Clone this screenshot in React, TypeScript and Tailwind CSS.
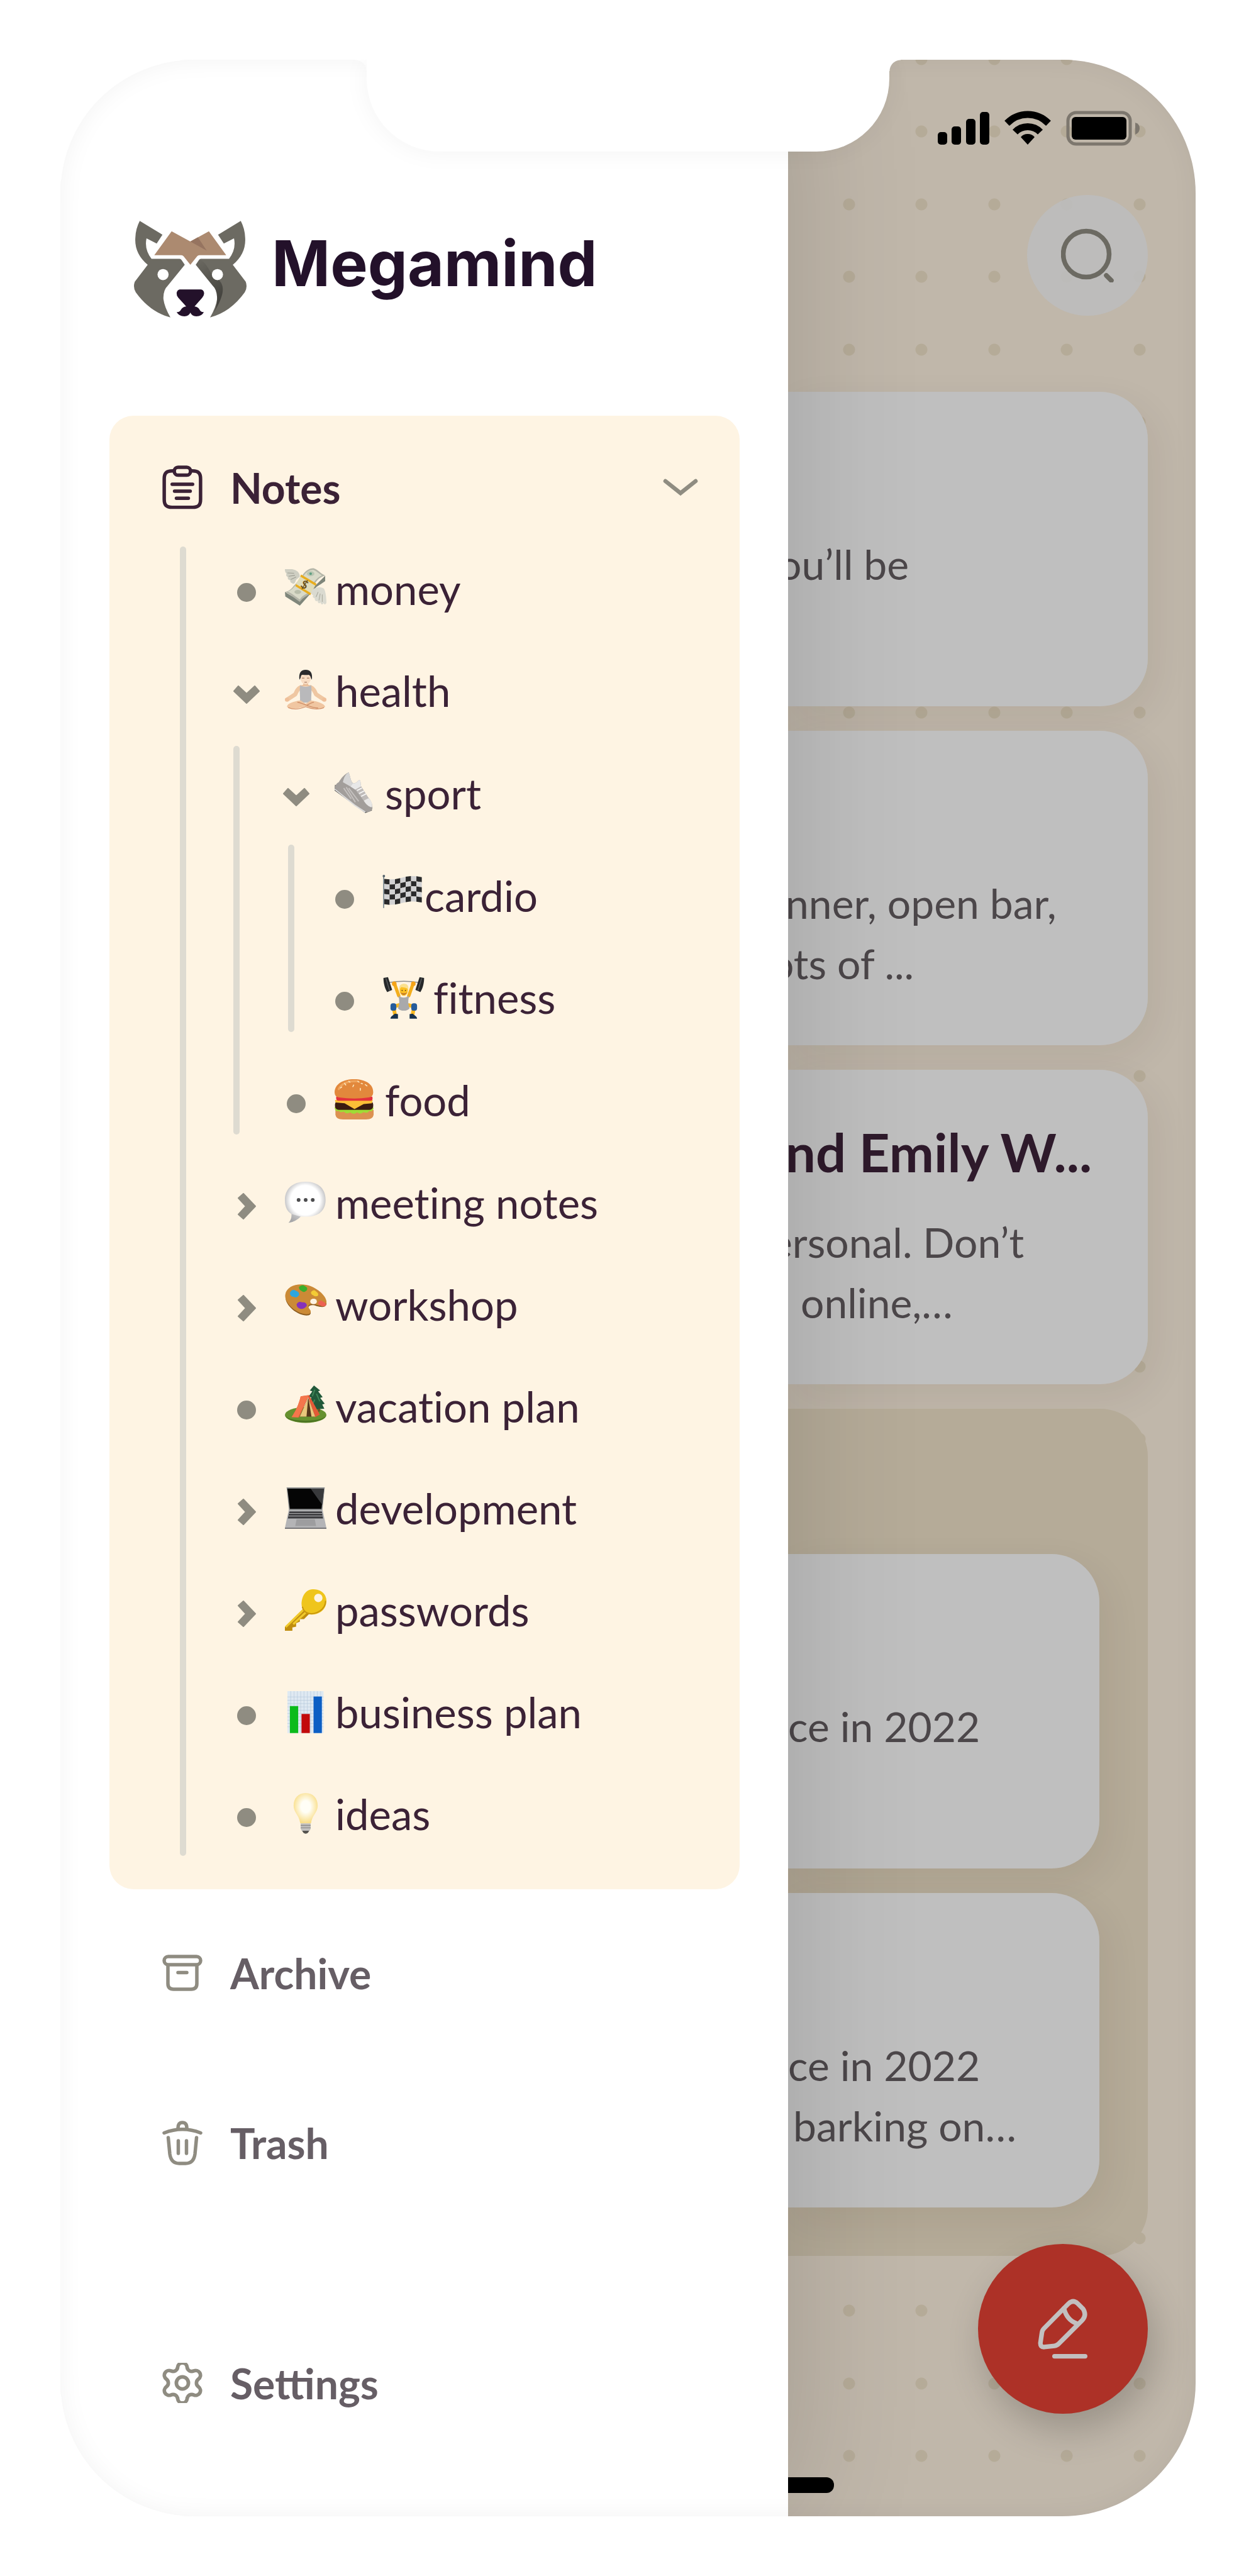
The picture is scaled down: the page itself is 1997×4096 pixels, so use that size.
import React from "react";
import { Settings } from "lucide-react";

type Marker = "dot" | "open" | "closed";

type Note = {
  label: string;
  icon: React.ReactNode;
  marker: Marker;
  tight?: boolean;
  children?: Note[];
};

/* ---------- pictograms, all on a 100 x 100 grid ---------- */

function Picto({ children }: { children: React.ReactNode }) {
  return (
    <svg viewBox="0 0 100 100" className="size-[66px] shrink-0 overflow-visible" aria-hidden="true">
      {children}
    </svg>
  );
}

const Money = (
  <Picto>
    <path d="M0 58 L36 79 L97 19 V32 L76 46 L36 91 L1 69Z" fill="#7f867b" />
    <path d="M0 58 C14 56 18 46 28 36 L42 18 C50 6 60 0 70 1 C80 4 86 14 97 18 C84 22 76 30 70 42 L62 60 C52 70 44 70 36 82 C24 74 14 64 0 58Z" fill="#b4b5a8" />
    <path d="M6 57 C18 54 22 44 32 36 L44 20 C52 9 60 4 69 5 C77 8 82 14 89 18 C78 24 72 30 66 42 L58 58 C48 66 42 66 36 76 C26 70 18 62 6 57Z" fill="#d9dac8" />
    <ellipse cx="62" cy="14" rx="9" ry="6" fill="#b9c6b1" />
    <circle cx="62" cy="14" r="3" fill="#5d9f80" />
    <ellipse cx="31" cy="58" rx="8" ry="5" fill="#b9beab" />
    <path d="M39 17 L75 39 L61 65 L25 42Z" fill="#e0dcb9" />
    <path d="M39 16 L76 38 L74 43 L37 21Z" fill="#e9ad1d" />
    <path d="M27 39 L63 61 L61 66 L25 44Z" fill="#e9ad1d" />
    <text x="47" y="50" fontSize="27" fontWeight="700" textAnchor="middle" transform="rotate(28 47 41)" fill="#6b5118">$</text>
    <path d="M0 3 C10 4 16 1 24 5 C31 8 35 12 36 20 C34 24 28 26 26 31 C24 38 20 40 18 37 C14 36 12 33 13 30 C8 29 6 26 7 22 C3 20 2 17 4 14 C1 11 0 8 0 3Z" fill="#cfcfc3" />
    <path d="M6 12 L22 13 M9 20 L24 18 M14 28 L27 22" stroke="#9d9d92" strokeWidth="1.6" fill="none" />
    <path d="M66 53 C72 46 86 44 94 50 C98 56 100 72 100 84 C97 90 94 88 93 84 C91 90 87 89 86 83 C83 87 79 85 79 79 C75 82 71 79 72 73 C68 72 66 70 68 66 C63 64 62 60 66 53Z" fill="#dadad0" />
    <path d="M75 70 L80 58 M82 78 L85 62 M90 82 L90 64" stroke="#aaa99d" strokeWidth="1.6" fill="none" />
  </Picto>
);

const Yoga = (
  <Picto>
    <path d="M38 42 C31 45 28 52 25 59 L7 71 M62 42 C69 45 72 52 75 59 L93 71" stroke="#efc7a2" strokeWidth="10" strokeLinecap="round" strokeLinejoin="round" fill="none" />
    <circle cx="5" cy="72" r="5" fill="#efbf99" />
    <circle cx="95" cy="72" r="5" fill="#efbf99" />
    <path d="M44 26 H56 V36 L66 40 H34 L44 36Z" fill="#eac09c" />
    <path d="M37 37 C42 42 58 42 63 37 C66 50 62 66 64 79 H36 C38 66 34 50 37 37Z" fill="#b9b9bb" />
    <ellipse cx="50" cy="20" rx="12.5" ry="15" fill="#f8ddc4" />
    <path d="M35 24 C33 8 38 0 50 0 C62 0 67 8 65 24 C62 20 62 13 57 12 C50 14 41 10 39 14 C38 18 38 21 35 24Z" fill="#2b2b2d" />
    <path d="M41 20 h6 M53 20 h6 M47 30 h6" stroke="#94674f" strokeWidth="1.5" />
    <path d="M38 74 C20 76 5 82 5 89 C8 96 36 94 50 88 C64 94 92 96 97 89 C95 82 80 76 62 74 L50 82Z" fill="#f0c6a1" />
    <path d="M8 91 C22 97 38 94 50 89 C62 94 80 97 94 91" stroke="#d5936a" strokeWidth="2" fill="none" />
    <path d="M30 78 C44 80 60 92 80 92 M70 78 C62 80 56 84 52 86" stroke="#cf8f68" strokeWidth="2" fill="none" />
  </Picto>
);

const Sneaker = (
  <Picto>
    <path d="M1 30 L0 44 L74 98 L90 92 L88 82Z" fill="#4b4a4a" />
    <path d="M34 0 C38 10 38 20 44 26 C50 28 54 22 60 18 C64 22 62 28 64 34 L80 60 C86 66 92 74 91 88 C88 95 80 98 74 95 L48 78 L0 38 C2 30 6 26 10 24 C16 14 24 4 34 0Z" fill="#a29e9b" />
    <path d="M34 0 C38 10 38 20 44 26 L38 34 L20 24 C22 14 26 4 34 0Z" fill="#d6d6d6" />
    <path d="M44 26 C50 28 54 22 60 18 C64 22 62 28 64 34 L50 42 L38 34Z" fill="#e8e8e8" />
    <path d="M28 36 L50 72 M34 38 L58 70 M22 38 L40 64" stroke="#c4c0be" strokeWidth="3" fill="none" />
    <path d="M50 42 L64 34 L82 62 L70 68Z" fill="#bfbbb9" />
    <path d="M54 44 l12 -6 M59 51 l12 -6 M64 58 l12 -6" stroke="#f8f8f8" strokeWidth="2.5" />
    <path d="M70 68 L82 62 C88 68 92 76 90 84 C84 84 76 78 70 68Z" fill="#e8e7e6" />
    <path d="M0 40 L48 79 L74 96" stroke="#dddddd" strokeWidth="3" fill="none" />
  </Picto>
);

const wave = (col: number) => 9 - 3 * Math.sin((col / 7) * 6.28 - 2.9) - col * 0.6;

const Flag = (
  <Picto>
    <rect x="0" y="2" width="3" height="78" fill="#8c979c" />
    <circle cx="2" cy="3" r="3" fill="#56646b" />
    {Array.from({ length: 35 }, (_, i) => {
      const c = i % 7;
      const r = Math.floor(i / 7);
      const x = 3 + c * 12.9;
      const a = wave(c) + r * 12.2;
      const b = wave(c + 1) + r * 12.2;
      return (
        <path
          key={i}
          d={`M${x} ${a} L${x + 13} ${b} V${b + 12.4} L${x} ${a + 12.4}Z`}
          fill={(c + r) % 2 === 0 ? "#2a2a2b" : "#d2d2d3"}
        />
      );
    })}
  </Picto>
);

const Lifter = (
  <Picto>
    <path d="M14 14 Q50 8 86 14" stroke="#8e8e8e" strokeWidth="2" fill="none" />
    <path d="M1 3 L12 1 L22 32 L10 37 C4 28 1 14 1 3Z" fill="#26282a" />
    <path d="M99 3 L88 1 L78 32 L90 37 C96 28 99 14 99 3Z" fill="#26282a" />
    <path d="M7 4 L16 34 M93 4 L84 34" stroke="#5d6063" strokeWidth="2" />
    <path d="M28 18 L38 46 M72 18 L62 46" stroke="#f3ae1c" strokeWidth="8" strokeLinecap="round" />
    <circle cx="27" cy="17" r="5.5" fill="#f5a318" />
    <circle cx="73" cy="17" r="5.5" fill="#f5a318" />
    <path d="M40 68 L25 72 L29 92 M60 68 L75 72 L71 92" stroke="#f9b820" strokeWidth="9" strokeLinejoin="round" fill="none" />
    <path d="M37 46 C46 52 54 52 63 46 C60 58 60 66 64 76 C58 84 42 84 36 76 C40 66 40 58 37 46Z" fill="#a9a9ab" />
    <ellipse cx="50" cy="32" rx="10" ry="14" fill="#fbbf23" />
    <path d="M39 32 C38 20 44 17 51 17 C60 17 62 24 61 32 C58 26 50 26 44 25Z" fill="#fbe08d" />
    <path d="M42 38 Q50 50 58 38 Q50 42 42 38Z" fill="#c3782a" />
    <circle cx="46" cy="33" r="1.3" fill="#513414" />
    <circle cx="54" cy="33" r="1.3" fill="#513414" />
    <rect x="18" y="64" width="14" height="18" rx="6" fill="#265c9b" />
    <rect x="68" y="64" width="14" height="18" rx="6" fill="#265c9b" />
    <path d="M18 101 C18 95 26 93 28 89 L36 90 V101Z" fill="#17324f" />
    <path d="M82 101 C82 95 74 93 72 89 L64 90 V101Z" fill="#17324f" />
  </Picto>
);

const Burger = (
  <Picto>
    <path d="M2 74 H94 V86 Q92 97 76 97 H20 Q4 97 2 86Z" fill="#dc9151" />
    <path d="M0 68 Q4 64 12 68 H86 Q92 64 94 70 Q90 80 84 76 Q78 84 70 79 Q62 86 54 80 Q46 87 38 80 Q28 85 22 78 Q14 82 10 76 Q2 80 0 68Z" fill="#9fdb35" />
    <rect x="1" y="52" width="92" height="22" rx="9" fill="#3b1c11" />
    <path d="M1 50 H92 L90 58 L70 60 L48 72 L24 58 L2 56Z" fill="#fbbf37" />
    <path d="M4 42 H91 Q93 52 86 52 H9 Q2 51 4 42Z" fill="#e4313c" />
    <path d="M0 32 C0 12 20 0 47 0 C74 0 94 12 93 32 Q93 43 82 44 Q48 49 11 44 Q0 43 0 32Z" fill="#e2883c" />
    <path d="M10 24 C18 8 38 4 56 5" stroke="#f5b06a" strokeWidth="5" strokeLinecap="round" fill="none" opacity=".7" />
    <path d="M24 10 l3 4 M46 14 l-2 4 M34 5 l3 2 M62 22 l0 5 M74 13 l4 3 M56 5 l3 2 M64 10 l3 1 M14 21 l3-2" stroke="#fbe6bd" strokeWidth="2.4" strokeLinecap="round" />
  </Picto>
);

const Bubble = (
  <Picto>
    <defs>
      <radialGradient id="bubble" cx=".5" cy=".45" r=".6">
        <stop offset=".6" stopColor="#ffffff" />
        <stop offset="1" stopColor="#a2a2a5" />
      </radialGradient>
    </defs>
    <path d="M50 0 C82 0 98 18 98 44 C98 72 78 85 50 84 H38 Q26 96 9 99 Q17 90 16 78 C6 72 0 62 0 44 C0 18 18 0 50 0Z" fill="url(#bubble)" />
    <path d="M9 99 Q17 90 16 78 L38 84 Q26 96 9 99Z" fill="#a8a8aa" opacity=".6" />
    <circle cx="33" cy="44" r="4.5" fill="#4c4c4e" />
    <circle cx="50" cy="44" r="4.5" fill="#4c4c4e" />
    <circle cx="67" cy="44" r="4.5" fill="#4c4c4e" />
  </Picto>
);

const Palette = (
  <Picto>
    <path d="M2 30 C4 6 36 -2 62 10 C84 18 102 36 100 50 C96 60 84 56 76 54 C66 50 58 52 56 58 C58 66 66 68 60 75 C52 80 32 74 18 62 C6 52 0 40 2 30Z" fill="#8c5c20" />
    <path d="M1 26 C4 4 36 -4 62 6 C84 15 102 33 100 47 C96 57 84 53 76 51 C66 47 58 49 56 55 C58 63 66 65 60 72 C52 77 32 71 18 59 C6 49 -1 36 1 26Z" fill="#cb8a36" />
    <ellipse cx="69" cy="43" rx="8" ry="6.5" fill="#fef4e3" />
    <path d="M12 22 q6-10 14-5 q10 3 8 11 q-6 8-12 4 q-10 0-10-10Z" fill="#2ea6df" />
    <path d="M34 8 q8-7 14-2 q8 3 5 10 q-7 7-12 2 q-8-3-7-10Z" fill="#3aae2c" />
    <path d="M63 20 q7-8 12-1 q8 5 4 11 q-8 2-11-2 q-6-2-5-8Z" fill="#f3cb35" />
    <path d="M80 46 q5-8 11-3 q9 3 8 10 q-8 4-13 0 q-6-1-6-7Z" fill="#ec6151" />
    <path d="M28 50 q5-9 13-5 q11-1 12 8 q-6 9-15 8 q-9-2-10-11Z" fill="#8531ba" />
  </Picto>
);

const Tent = (
  <Picto>
    <ellipse cx="50" cy="71" rx="50" ry="19" fill="#66912f" />
    <path d="M0 70 a50 19 0 0 0 100 0 a50 15 0 0 1-100 0Z" fill="#4c7421" />
    <path d="M70 0 L60 12 L66 14 L57 27 L64 29 L55 42 L63 44 L70 58 L95 56 L90 46 L96 44 L85 30 L91 28 L80 14 L85 12Z" fill="#22593a" />
    <path d="M72 10 L66 26 M76 20 L84 38 M72 34 L66 46" stroke="#3f8658" strokeWidth="3" />
    <rect x="80" y="56" width="4" height="7" fill="#6d4526" />
    <path d="M38 26 L58 23 L84 70 L72 77 L56 28 L34 77 L16 76 C26 62 34 44 38 26Z" fill="#e45a37" />
    <path d="M38 26 L57 24 L32 77 L16 76 C26 62 34 44 38 26Z" fill="#f4764c" />
    <path d="M56 30 L73 75 H36Z" fill="#56371c" />
    <path d="M56 30 L52 75 H36Z M57 32 L64 75 H73Z" fill="#e9c77c" />
  </Picto>
);

const Laptop = (
  <Picto>
    <path d="M4 0 H96 L90 57 H10Z" fill="#8f9192" />
    <path d="M6 3 H94 L88 52 H12Z" fill="#050505" />
    <path d="M62 3 H94 L90 42Z" fill="#38393b" />
    <path d="M9 55 H91 L100 98 H0Z" fill="#b4b4b6" />
    <path d="M11 58 H89 L92 75 H7Z" fill="#3d3d40" />
    <path d="M10 63 H90 M9 69 H91" stroke="#b4b4b6" strokeWidth="1.5" />
    <path d="M28 77 H72 L75 93 H25Z" fill="#9d9d9f" />
    <path d="M0 97 H100 V100 H0Z" fill="#77777a" />
  </Picto>
);

const Key = (
  <Picto>
    <path d="M42 50 L0 91 V100 H18 V92 L27 90 V82 L36 78 V72 H46 L60 58Z" fill="#c08d0e" />
    <path d="M44 50 L2 91 M50 56 L20 84" stroke="#f0c92b" strokeWidth="5" />
    <path fillRule="evenodd" d="M68 0 C88 0 100 12 100 28 C100 48 84 61 64 61 C48 60 40 48 40 34 C41 14 52 0 68 0Z M80 11 a10 10 0 1 0 1 0Z" fill="#efc51c" />
    <path d="M42 42 C46 60 64 62 78 56 C90 50 98 40 98 28" stroke="#c8960e" strokeWidth="3" fill="none" />
  </Picto>
);

const Chart = (
  <Picto>
    <rect x="6" y="0" width="87" height="101" fill="#dfe9f2" />
    {[14, 22, 30, 38, 46, 54, 62, 70, 78, 86].map((v) => (
      <path key={v} d={`M${v} 0 V101 M6 ${v} H93`} stroke="#b5cadc" strokeWidth="1" />
    ))}
    <rect x="12" y="36" width="20" height="65" fill="#0cbb1b" />
    <rect x="40" y="55" width="20" height="46" fill="#c20a0c" />
    <rect x="69" y="13" width="20" height="88" fill="#0b5ec4" />
  </Picto>
);

const Bulb = (
  <Picto>
    <defs>
      <radialGradient id="bulb" cx=".5" cy=".45" r=".55">
        <stop offset=".35" stopColor="#fffef6" />
        <stop offset="1" stopColor="#f9dd86" />
      </radialGradient>
    </defs>
    <path d="M50 0 C68 0 79 13 79 30 C79 48 66 52 63 73 H37 C34 52 21 48 21 30 C21 13 32 0 50 0Z" fill="url(#bulb)" />
    <path d="M38 73 H62 V86 Q60 92 57 93 H43 Q40 92 38 86Z" fill="#c2c1bf" />
    <path d="M38 78 H62 M38 84 H62" stroke="#8e8d8b" strokeWidth="2" />
    <path d="M42 91 H58 Q56 98 50 98 Q44 98 42 91Z" fill="#55534f" />
  </Picto>
);

const notes: Note[] = [
  { label: "money", icon: Money, marker: "dot" },
  {
    label: "health",
    icon: Yoga,
    marker: "open",
    children: [
      {
        label: "sport",
        icon: Sneaker,
        marker: "open",
        children: [
          { label: "cardio", icon: Flag, marker: "dot", tight: true },
          { label: "fitness", icon: Lifter, marker: "dot" },
        ],
      },
      { label: "food", icon: Burger, marker: "dot" },
    ],
  },
  { label: "meeting notes", icon: Bubble, marker: "closed" },
  { label: "workshop", icon: Palette, marker: "closed" },
  { label: "vacation plan", icon: Tent, marker: "dot" },
  { label: "development", icon: Laptop, marker: "closed" },
  { label: "passwords", icon: Key, marker: "closed" },
  { label: "business plan", icon: Chart, marker: "dot" },
  { label: "ideas", icon: Bulb, marker: "dot" },
];

/* ---------- interface icons ---------- */

function RaccoonLogo() {
  const half =
    "M98 87 L212 156 L183 200 L132 174 Q120 228 157 277 H298 Q304 277 308 283 L324 307 L240 410 Q214 435 217 480 Q222 520 252 571 Q150 545 78 445 Q63 420 73 392 L138 307 Q70 250 76 170 Q78 125 98 87Z";
  return (
    <svg viewBox="69 86 565 486" className="h-[154px] w-[179px] shrink-0" aria-hidden="true">
      <defs>
        <linearGradient id="shade" x1="0" y1="0" x2=".4" y2="1">
          <stop offset="0" stopColor="#3a3935" stopOpacity="0" />
          <stop offset="1" stopColor="#3a3935" stopOpacity=".85" />
        </linearGradient>
      </defs>
      <path d={half} fill="#6c6a62" />
      <path d={half} fill="#6c6a62" transform="matrix(-1 0 0 1 703 0)" />
      <path d="M379 307 L398 282 C440 296 446 350 478 372 C528 400 530 450 468 550 C486 515 487 495 486 470 Q484 428 463 410Z" fill="url(#shade)" />
      <circle cx="215" cy="356" r="28" fill="#fff" />
      <circle cx="488" cy="356" r="28" fill="#fff" />
      <path d="M258 139 L352 190 L445 139 L532 259 H398 Q390 259 386 264 L352 307 L318 264 Q314 259 306 259 H171Z" fill="#ac8a70" />
      <path d="M352 190 L390 169 L434 236Z" fill="#967460" />
      <path d="M298 431 H406 Q421 434 421 452 Q420 462 412 472 L373 516 Q390 518 397 530 Q405 546 420 544 Q410 566 382 566 Q358 564 352 547 Q346 564 322 566 Q294 566 283 544 Q298 546 305 532 Q314 518 331 516 L291 472 Q282 460 283 448 Q286 434 298 431Z" fill="#23112a" />
    </svg>
  );
}

function ClipboardIcon() {
  return (
    <svg viewBox="203 267 151 166" className="h-[70px] w-16 shrink-0" fill="none" stroke="currentColor" strokeWidth="13" strokeLinecap="round" aria-hidden="true">
      <path d="M246 288H240C218 288 210 296 210 318V395C210 417 218 425 240 425H317C339 425 347 417 347 395V318C347 296 339 288 317 288H311" />
      <rect x="248" y="274" width="61" height="30" rx="14" />
      <path d="M240 338H317M249 364H308M256 391H301" />
    </svg>
  );
}

function ArchiveIcon() {
  return (
    <svg viewBox="0 0 64 58" className="h-[58px] w-16 shrink-0" fill="none" stroke="currentColor" strokeWidth="5.5" strokeLinecap="round" aria-hidden="true">
      <rect x="3" y="3" width="58" height="13" rx="6.5" />
      <path d="M9 17V46Q9 55 18 55H46Q55 55 55 46V17M25 28.5H39" />
    </svg>
  );
}

function TrashIcon() {
  return (
    <svg viewBox="0 0 64 71" className="h-[71px] w-16 shrink-0" fill="none" stroke="currentColor" strokeWidth="5.5" strokeLinecap="round" aria-hidden="true">
      <path d="M25 12C25 6 27 3 32 3S39 6 39 12" />
      <path d="M3 19.5Q32 8 61 19.5" />
      <path d="M9.5 27L12 53Q14 68 27 68H37Q50 68 52 53L54.5 27M25.5 32V52M38.5 32V52" />
    </svg>
  );
}

function MarkerIcon({ kind }: { kind: Marker }) {
  return (
    <span className="flex w-[42px] shrink-0 justify-center text-[#8f8c81]">
      {kind === "dot" && <span className="size-[30px] rounded-full bg-current" />}
      {kind === "closed" && (
        <svg viewBox="0 0 29 42" className="h-[42px] w-[29px]" fill="currentColor" stroke="currentColor" strokeWidth="2" strokeLinejoin="round" aria-hidden="true">
          <path d="M9 1L28 21L9 41L1 34L13 21L1 8Z" />
        </svg>
      )}
      {kind === "open" && (
        <svg viewBox="0 0 42 29" className="h-[29px] w-[42px]" fill="currentColor" stroke="currentColor" strokeWidth="2" strokeLinejoin="round" aria-hidden="true">
          <path d="M1 9L21 28L41 9L34 1L21 13L8 1Z" />
        </svg>
      )}
    </span>
  );
}

/* ---------- drawer ---------- */

const guideClasses = ["mt-2 mb-5 mr-[75px]", "mb-8 mr-[69px]", "-mt-1.5 mb-8 mr-[59px] ml-2"];

function NoteTree({ items, depth = 0 }: { items: Note[]; depth?: number }) {
  return (
    <div className={depth === 0 ? "flex" : "flex py-px"}>
      <span className={`w-2.5 shrink-0 rounded-full bg-[#dedbd1] ${guideClasses[depth]}`} />
      <ul className="min-w-0 flex-1">
        {items.map((item) => (
          <li key={item.label}>
            <button
              type="button"
              aria-expanded={item.marker === "dot" ? undefined : item.marker === "open"}
              className="flex h-[162px] w-full items-center gap-10 text-left text-[67px] leading-[96px] whitespace-nowrap text-[#3b2236] [font-variant-ligatures:none]"
            >
              <MarkerIcon kind={item.marker} />
              <span className={item.tight ? "mb-3 flex items-center" : "mb-3 flex items-center gap-3.5"}>
                {item.icon}
                <span>{item.label}</span>
              </span>
            </button>
            {item.children && <NoteTree items={item.children} depth={depth + 1} />}
          </li>
        ))}
      </ul>
    </div>
  );
}

function NavLink({ icon, label }: { icon: React.ReactNode; label: string }) {
  return (
    <a href={`#${label.toLowerCase()}`} className="flex h-[270px] items-center gap-11 pb-1 pl-[84px] text-[66px] font-bold text-[#665e65]">
      <span className="text-[#8f8c81]">{icon}</span>
      {label}
    </a>
  );
}

function Drawer() {
  return (
    <aside className="relative z-10 flex w-[64.1%] shrink-0 flex-col bg-white pt-64 pr-[77px] pb-[75px] pl-[78px] shadow-[0_0_200px_rgba(0,0,0,0.16)]">
      <header className="flex gap-10 pb-[156px] pl-[39px]">
        <RaccoonLogo />
        <h1 className="font-['Inter'] text-[100px] leading-[136px] font-bold text-[#23112a]">Megamind</h1>
      </header>
      <nav>
        <section className="rounded-[38px] bg-[#fef4e3] pt-7 pb-[33px]">
          <button type="button" aria-expanded="true" className="flex h-[172px] w-full items-center gap-11 pr-[66px] pl-[84px] text-[#3b2236]">
            <ClipboardIcon />
            <span className="text-[66px] font-bold">Notes</span>
            <svg viewBox="0 0 56 28" className="ml-auto h-7 w-14 text-[#8f8c81]" fill="none" stroke="currentColor" strokeWidth="6.5" strokeLinecap="round" aria-hidden="true">
              <path d="M4 4L28 23L52 4" />
            </svg>
          </button>
          <div className="pl-28">
            <NoteTree items={notes} />
          </div>
        </section>
        <NavLink icon={<ArchiveIcon />} label="Archive" />
        <NavLink icon={<TrashIcon />} label="Trash" />
      </nav>
      <div className="mt-auto pt-28">
        <NavLink icon={<Settings viewBox="2 2 20 20" strokeWidth={1.8} className="size-16" aria-hidden="true" />} label="Settings" />
      </div>
    </aside>
  );
}

/* ---------- notes feed behind the drawer ---------- */

function StatusBar() {
  return (
    <div className="flex items-center justify-end gap-6 pt-[81px] pr-[89px] text-black">
      <svg viewBox="0 0 82 56" className="h-14 w-[82px]" aria-label="Signal">
        <rect x="0" y="34" width="15" height="20" rx="5" />
        <rect x="22" y="25" width="15" height="29" rx="5" />
        <rect x="45" y="13" width="15" height="41" rx="5" />
        <rect x="67" y="2" width="15" height="52" rx="5" />
      </svg>
      <svg viewBox="0 0 74 56" className="h-14 w-[74px]" fill="none" stroke="#000" strokeWidth="11" aria-label="Wi-Fi">
        <path d="M4 20Q18 6 37 6T70 20" />
        <path d="M17 34Q25 25.5 37 25.5T57 34" />
        <path d="M37 54L26 42Q30 37 37 37T48 42Z" fill="#000" stroke="none" />
      </svg>
      <svg viewBox="0 0 117 56" className="h-14 w-[117px]" aria-label="Battery">
        <rect x="3" y="3" width="99" height="50" rx="13" fill="none" stroke="#7d776e" strokeWidth="5" />
        <rect x="9" y="10" width="87" height="36" rx="6" />
        <path d="M110 19Q117 21 117 28T110 38Z" fill="#7d776e" />
      </svg>
    </div>
  );
}

function Card({ title, children }: { title?: string; children: React.ReactNode }) {
  return (
    <article className="h-[500px] overflow-hidden rounded-r-[76px] bg-[#bfbfbf] pt-20 whitespace-nowrap">
      <div className="h-[146px]">
        {title && <h2 className="-ml-1 text-[85px] leading-[100px] font-bold text-[#2e1a2b]">{title}</h2>}
      </div>
      <div className="text-[66px] leading-[96px] text-[#4c474a]">{children}</div>
    </article>
  );
}

function Lift({ children }: { children: React.ReactNode }) {
  return <div className="rounded-r-[76px] shadow-[12px_20px_60px_rgba(40,25,10,0.07)]">{children}</div>;
}

function Feed() {
  return (
    <main className="relative flex min-w-0 flex-1 flex-col overflow-hidden bg-[#c0b7aa] [background-image:radial-gradient(circle_at_10px_10px,#b5ab98_9px,transparent_10px),radial-gradient(circle_at_10px_10px,#b5ab98_9px,transparent_10px),radial-gradient(circle_at_10px_10px,#b5ab98_9px,transparent_10px),radial-gradient(circle_at_10px_10px,#b5ab98_9px,transparent_10px)] [background-position:87px_-11px,202px_-11px,87px_104px,202px_104px] [background-size:231px_231px]">
      <StatusBar />
      <button type="button" aria-label="Search" className="mt-[78px] mr-[76px] flex size-48 items-center justify-center self-end rounded-full bg-[#bdbdbd]/90">
        <svg viewBox="0 0 84 86" className="h-[86px] w-[84px] text-[#6c6a62]" fill="none" stroke="currentColor" strokeWidth="7.5" strokeLinecap="round" aria-hidden="true">
          <circle cx="40" cy="41" r="36.5" />
          <path d="M72 75L80 83" />
        </svg>
      </button>
      <div className="mt-[121px] mr-[76px] flex flex-col gap-[39px]">
        <Lift>
          <Card>
            <p className="-ml-4">ou’ll be</p>
          </Card>
        </Lift>
        <Lift>
          <Card>
            <p className="-ml-1">nner, open bar,</p>
            <p className="-ml-7">ots of ...</p>
          </Card>
        </Lift>
        <Lift>
          <Card title="nd Emily W...">
            <p className="-ml-7">ersonal. Don’t</p>
            <p className="ml-5">online,…</p>
          </Card>
        </Lift>
        <section className="flex flex-col gap-[39px] rounded-r-[76px] bg-[#b5ab98] pt-[231px] pr-[77px] pb-[77px]">
          <Lift>
            <Card>
              <p>ce in 2022</p>
            </Card>
          </Lift>
          <Lift>
            <Card>
              <p>ce in 2022</p>
              <p className="ml-2">barking on…</p>
            </Card>
          </Lift>
        </section>
      </div>
      <div className="mt-auto mb-[37px] h-[25px] w-[73px] rounded-r-xl bg-black" />
      <button
        type="button"
        aria-label="New note"
        className="absolute right-[76px] bottom-[163px] flex size-[270px] items-center justify-center rounded-full bg-[#ad3127] shadow-[10px_26px_60px_rgba(0,0,0,0.2)]"
      >
        <svg viewBox="865 661 161 197" className="h-24 w-20 text-[#c2c0c0]" fill="none" stroke="currentColor" strokeWidth="15" strokeLinecap="round" strokeLinejoin="round" aria-hidden="true">
          <path d="M964 677L884 758Q878 764 877 772L872 806Q872 819 884 819L918 815Q926 814 932 808L1009 731Q1024 714 1011 694L994 677Q979 663 964 677Z" />
          <path d="M949 693Q958 730 990 742" />
          <path d="M918 849H1018" />
        </svg>
      </button>
    </main>
  );
}

export default function App() {
  return (
    <div className="min-h-screen bg-white px-24 py-[95px] font-['Lato',sans-serif]">
      <div className="relative flex overflow-hidden rounded-[212px]">
        <Drawer />
        <Feed />
        <div className="pointer-events-none absolute inset-0 z-20 rounded-[212px] shadow-[inset_0_0_40px_rgba(0,0,0,0.05)]" />
        <div className="pointer-events-none absolute inset-x-0 top-0 z-20 flex justify-center">
          <span className="size-[18px] bg-[radial-gradient(circle_at_0_100%,transparent_17px,#fff_18px)]" />
          <span className="h-[146px] w-[46%] rounded-b-[116px] bg-white shadow-[0_0_40px_rgba(0,0,0,0.05)]" />
          <span className="size-[18px] bg-[radial-gradient(circle_at_100%_100%,transparent_17px,#fff_18px)]" />
        </div>
      </div>
    </div>
  );
}
